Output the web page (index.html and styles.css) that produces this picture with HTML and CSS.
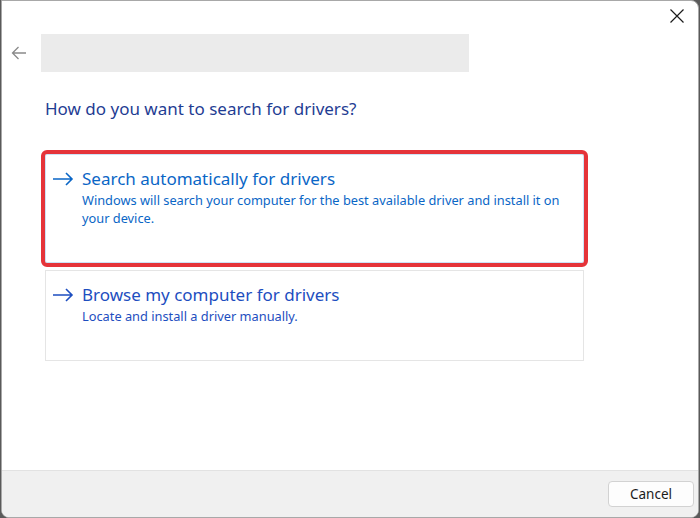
FILE: index.html
```html
<!DOCTYPE html>
<html lang="en">

<head>
    <title>Update Drivers</title>
    <link rel="stylesheet" href="styles.css">
</head>

<body>
    <div class="window">
        <button class="close" title="Close">
            <svg width="16" height="16" viewBox="0 0 16 16"><path d="M1.5 1.5 L14.5 14.5 M14.5 1.5 L1.5 14.5" stroke="#1b1b1b" stroke-width="1.2" fill="none"/></svg>
        </button>

        <div class="main">
            <div class="topbar">
                <svg class="back" width="16" height="14" viewBox="0 0 16 14"><path d="M15 7 H1.5 M7.5 1 L1.5 7 L7.5 13" stroke="#8a8a8a" stroke-width="1.3" fill="none"/></svg>
                <div class="blurred"></div>
            </div>

            <h2>How do you want to search for drivers?</h2>

            <div class="options">
                <div class="option hover">
                    <svg class="arrow" width="22" height="14" viewBox="0 0 22 14"><path d="M1 7 H20 M14 1 L20 7 L14 13" stroke="currentColor" stroke-width="1.6" fill="none"/></svg>
                    <div>
                        <div class="title">Search automatically for drivers</div>
                        <div class="desc">Windows will search your computer for the best available driver and install it on your device.</div>
                    </div>
                </div>
                <div class="option">
                    <svg class="arrow" width="22" height="14" viewBox="0 0 22 14"><path d="M1 7 H20 M14 1 L20 7 L14 13" stroke="currentColor" stroke-width="1.6" fill="none"/></svg>
                    <div>
                        <div class="title">Browse my computer for drivers</div>
                        <div class="desc">Locate and install a driver manually.</div>
                    </div>
                </div>
            </div>
        </div>

        <div class="footer">
            <button class="cancel">Cancel</button>
        </div>
    </div>
</body>

</html>
```
FILE: styles.css
```css
body {
    margin: 0;
    background-color: #5a5a5a;
    font-family: "Noto Sans", "Open Sans", sans-serif;
}
.window {
    position: relative;
    margin-left: 1px;
    width: 696px;
    height: 516px;
    background-color: white;
    border: 1px solid #a8a8a8;
    border-radius: 0 8px 8px 8px;
    display: flex;
    flex-direction: column;
    overflow: hidden;
}
.close {
    position: absolute;
    top: 7px;
    right: 13px;
    border: none;
    background: none;
    padding: 0;
    width: 16px;
    height: 16px;
}
.main {
    flex: 1;
}
.topbar {
    display: flex;
    align-items: center;
    gap: 14px;
    margin-top: 33px;
    padding-left: 9px;
}
.blurred {
    width: 428px;
    height: 38px;
    background-color: #ebebeb;
}
h2 {
    margin: 25px 0 0 43px;
    font-size: 17px;
    font-weight: normal;
    color: #1f3d93;
}
.options {
    margin: 34px 0 0 43px;
    width: 539px;
    display: flex;
    flex-direction: column;
    gap: 7px;
}
.option {
    display: flex;
    gap: 8px;
    padding: 11px 10px 35px 6px;
    border: 1px solid #e5e5e5;
    color: #1d4ec0;
}
.option.hover {
    border-color: #cbe3f7;
    color: #0a66c6;
    outline: 4px solid #e5343a;
    border-radius: 2px;
}
.arrow {
    flex-shrink: 0;
    margin-top: 6px;
}
.title {
    font-size: 17px;
    line-height: 25px;
}
.desc {
    font-size: 12.8px;
    line-height: 18px;
}
.footer {
    height: 46px;
    background-color: #f0f0f0;
    border-top: 1px solid #e2e2e2;
    display: flex;
    justify-content: flex-end;
    align-items: center;
    padding-right: 4px;
}
.cancel {
    width: 86px;
    height: 26px;
    font-family: "Noto Sans", sans-serif;
    font-size: 13.5px;
    background-color: #fdfdfd;
    border: 1px solid #d2d2d2;
    border-radius: 4px;
    color: #1b1b1b;
}
```
